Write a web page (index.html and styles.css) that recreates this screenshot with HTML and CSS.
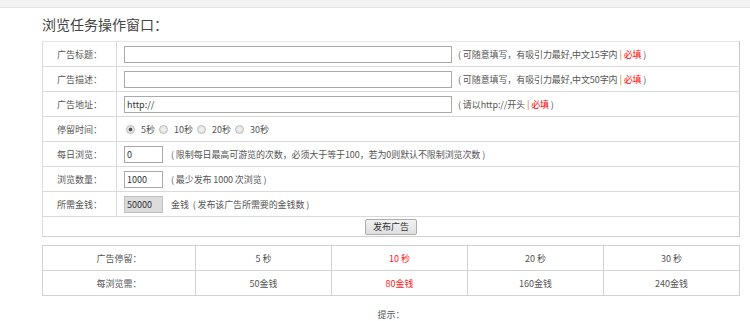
FILE: index.html
```html
<!DOCTYPE html>
<html lang="zh-CN">
<head>
    <meta charset="UTF-8">
    <title>浏览任务操作窗口</title>
    <link rel="stylesheet" href="styles.css">
</head>
<body>
    <!-- top strip -->
    <div class="topbar"></div>

    <div class="wrap">
        <h1 class="title">浏览任务操作窗口：</h1>

        <!-- publish form -->
        <table class="form-table">
            <tr>
                <td class="label">广告标题：</td>
                <td class="field"><input type="text" class="text-long"><span class="hint">( 可随意填写，有吸引力最好,中文15字内 <b class="sep">|</b> <em class="must">必填</em> )</span></td>
            </tr>
            <tr>
                <td class="label">广告描述：</td>
                <td class="field"><input type="text" class="text-long"><span class="hint">( 可随意填写，有吸引力最好,中文50字内 <b class="sep">|</b> <em class="must">必填</em> )</span></td>
            </tr>
            <tr>
                <td class="label">广告地址：</td>
                <td class="field"><input type="text" class="text-long" value="http://"><span class="hint">( 请以http://开头 <b class="sep">|</b> <em class="must">必填</em> )</span></td>
            </tr>
            <tr>
                <td class="label">停留时间：</td>
                <td class="field">
                    <label class="opt"><input type="radio" name="stay" checked>5秒</label>
                    <label class="opt"><input type="radio" name="stay">10秒</label>
                    <label class="opt"><input type="radio" name="stay">20秒</label>
                    <label class="opt"><input type="radio" name="stay">30秒</label>
                </td>
            </tr>
            <tr>
                <td class="label">每日浏览：</td>
                <td class="field"><input type="text" class="text-short" value="0"><span class="hint wide">( 限制每日最高可游览的次数，必须大于等于100，若为0则默认不限制浏览次数 )</span></td>
            </tr>
            <tr>
                <td class="label">浏览数量：</td>
                <td class="field"><input type="text" class="text-short" value="1000"><span class="hint wide">( 最少发布 1000 次浏览 )</span></td>
            </tr>
            <tr>
                <td class="label">所需金钱：</td>
                <td class="field"><input type="text" class="text-short readonly" value="50000" readonly><span class="hint wide">金钱 &nbsp;( 发布该广告所需要的金钱数 )</span></td>
            </tr>
            <tr class="submit-row">
                <td colspan="2"><button class="btn">发布广告</button></td>
            </tr>
        </table>

        <!-- price table -->
        <table class="price-table">
            <tr>
                <td class="first">广告停留：</td>
                <td>5 秒</td>
                <td class="hot">10 秒</td>
                <td>20 秒</td>
                <td>30 秒</td>
            </tr>
            <tr>
                <td class="first">每浏览需：</td>
                <td>50金钱</td>
                <td class="hot">80金钱</td>
                <td>160金钱</td>
                <td>240金钱</td>
            </tr>
        </table>

        <p class="tips">提示：</p>
    </div>
</body>
</html>
```

FILE: styles.css
```css
body {
    margin: 0;
    padding: 0;
    background-color: #fff;
    font-family: "Noto Sans CJK SC", "Liberation Sans", sans-serif;
    font-size: 9px;
    color: #555;
}

.topbar {
    height: 7px;
    background-color: #f2f2f2;
    border-bottom: 1px solid #e4e4e4;
}

.wrap {
    margin: 0 10px 0 42px;
    width: 698px;
}

.title {
    margin: 0;
    font-size: 14px;
    font-weight: normal;
    line-height: 33px;
    color: #444;
}

/* form table */
.form-table {
    width: 698px;
    border-collapse: collapse;
    border-top: 1px solid #e6e6e6;
    border-left: 1px solid #dcdcdc;
    border-right: 1px solid #c8c8c8;
    border-bottom: 1px solid #d0d0d0;
}

.form-table td {
    height: 24px;
    padding: 0;
    border-bottom: 1px solid #dadada;
    vertical-align: middle;
}

.form-table .label {
    width: 73px;
    text-align: center;
    border-right: 1px solid #dadada;
}

.form-table .field {
    padding-left: 7px;
    white-space: nowrap;
}

.form-table input[type="text"] {
    box-sizing: border-box;
    height: 17px;
    margin: 0;
    padding: 0 2px;
    border: 1px solid #a9a9a9;
    font-family: "Noto Sans CJK SC", "Liberation Sans", sans-serif;
    font-size: 9px;
    color: #333;
    vertical-align: middle;
}

.text-long {
    width: 328px;
}

.text-short {
    width: 39px;
}

.form-table input.readonly {
    background-color: #dcdcdc;
    border-color: #c0c0c0;
}

.hint {
    margin-left: 6px;
    vertical-align: middle;
    letter-spacing: -0.1px;
}

.hint.wide {
    margin-left: 8px;
}

.sep {
    font-weight: normal;
    color: #c8741a;
}

.must {
    font-style: normal;
    color: #f00;
}

.opt {
    display: inline-flex;
    align-items: center;
    margin-left: 2px;
    margin-right: 0;
    vertical-align: middle;
}

.opt input[type="radio"] {
    appearance: none;
    -webkit-appearance: none;
    box-sizing: border-box;
    width: 9px;
    height: 9px;
    margin: 0 6px 0 0;
    border: 1px solid #bdbdbd;
    border-radius: 50%;
    background: radial-gradient(circle, #f4f4f4 0, #dcdcdc 100%);
}

.opt input[type="radio"]:checked {
    background: radial-gradient(circle, #555 0, #555 1.6px, #e6e6e6 2.2px, #d8d8d8 100%);
}

.submit-row td {
    height: 19px;
    border-bottom: none;
    text-align: center;
}

.btn {
    width: 52px;
    height: 16px;
    padding: 0;
    margin: 0;
    border: 1px solid #acacac;
    border-radius: 2px;
    background: linear-gradient(#f2f2f2, #dedede);
    font-family: "Noto Sans CJK SC", "Liberation Sans", sans-serif;
    font-size: 9px;
    color: #333;
    vertical-align: middle;
}

/* price table */
.price-table {
    width: 698px;
    margin-top: 8px;
    border-collapse: collapse;
    table-layout: fixed;
}

.price-table td {
    height: 24px;
    padding: 0;
    border: 1px solid #d2d2d2;
    text-align: center;
}

.price-table .first {
    width: 152px;
}

.price-table .hot {
    color: #f22;
}

.tips {
    margin: 12px 0 0;
    text-align: center;
}
```
